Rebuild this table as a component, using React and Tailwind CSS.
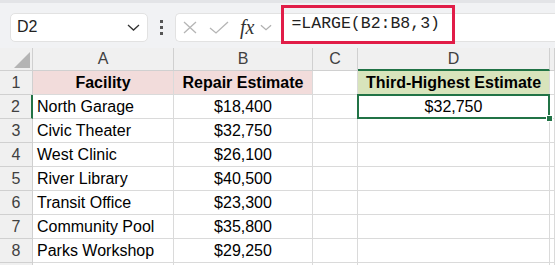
import React from "react";

const rows = [
  ["North Garage", "$18,400"],
  ["Civic Theater", "$32,750"],
  ["West Clinic", "$26,100"],
  ["River Library", "$40,500"],
  ["Transit Office", "$23,300"],
  ["Community Pool", "$35,800"],
  ["Parks Workshop", "$29,250"],
];

const hdr = "h-[23px] bg-[#f0f0f0] border-r border-b border-[#d0d0d0] flex items-center justify-center text-[16px] text-[#404040]";
const cell = "h-[24px] border-r border-b border-[#dadada] flex items-center text-[16px] text-black whitespace-nowrap";
const rowHdr = "h-[24px] bg-[#f0f0f0] border-r border-b border-[#d0d0d0] flex items-center justify-center text-[16px] text-[#404040]";

const Chevron = ({ className }) => (
  <svg className={className} width="13" height="7" viewBox="0 0 13 7" fill="none">
    <path d="M1 1l5.5 5L12 1" stroke="currentColor" strokeWidth="1.3" />
  </svg>
);

const App = () => {
  return (
    <div
      className="w-[555px] h-[265px] overflow-hidden bg-white"
      style={{ fontFamily: '"Liberation Sans", Arial, sans-serif' }}
    >
      {/* formula toolbar */}
      <div className="h-[48px] bg-[#f1f2f4] border-t-[3px] border-[#e3e4e7] flex items-center pl-[10px]">
        <div className="w-[138px] h-[29px] bg-white rounded-[5px] border border-[#e2e2e2] flex items-center justify-between pl-[6px] pr-[7px] mt-[3px]">
          <span className="text-[16px] text-[#222]">D2</span>
          <Chevron className="text-[#333]" />
        </div>
        <div className="w-[27px] flex flex-col items-center gap-[3px] mt-[3px]">
          <span className="w-[3px] h-[3px] bg-[#555]" />
          <span className="w-[3px] h-[3px] bg-[#555]" />
          <span className="w-[3px] h-[3px] bg-[#555]" />
        </div>
        <div className="flex-1 h-[29px] bg-white rounded-l-[5px] border border-r-0 border-[#e2e2e2] flex items-center pl-[6px] mt-[3px]">
          <svg width="16" height="13" viewBox="0 0 16 13" className="text-[#b5b5b5]">
            <path d="M2 1l12 11M14 1L2 12" stroke="currentColor" strokeWidth="1.3" fill="none" />
          </svg>
          <svg width="20" height="13" viewBox="0 0 20 13" className="ml-[11px] text-[#b5b5b5]">
            <path d="M1 7l6 5L19 1" stroke="currentColor" strokeWidth="1.3" fill="none" />
          </svg>
          <span
            className="ml-[11px] text-[20px] italic text-[#333] leading-none"
            style={{ fontFamily: '"Liberation Serif", "Times New Roman", serif' }}
          >
            fx
          </span>
          <Chevron className="ml-[6px] text-[#b0b0b0] w-[12px]" />
          <div className="ml-[9px] w-[174px] h-[39px] mb-[5px] border-[3px] border-[#e11d48] flex items-center pl-[7px]">
            <span
              className="text-[16.5px] text-[#222]"
              style={{ fontFamily: '"Liberation Mono", "Courier New", monospace' }}
            >
              =LARGE(B2:B8,3)
            </span>
          </div>
        </div>
      </div>

      {/* sheet grid */}
      <div className="grid grid-cols-[33px_141px_139px_45px_192px_1fr]">
        <div className={hdr + " relative"}>
          <svg width="16" height="16" viewBox="0 0 16 16" className="absolute left-[14px] top-[4px]">
            <path d="M16 0V16H0Z" fill="#b4b4b4" />
          </svg>
        </div>
        <div className={hdr}>A</div>
        <div className={hdr}>B</div>
        <div className={hdr}>C</div>
        <div className={hdr + " bg-[#d3d3d3] text-[#217346] border-b-2 border-b-[#217346]"}>D</div>
        <div className={hdr} />

        <div className={rowHdr}>1</div>
        <div className={cell + " justify-center bg-[#f2dcdb] font-bold text-[15px]"}>Facility</div>
        <div className={cell + " justify-center bg-[#f2dcdb] font-bold text-[15px]"}>Repair Estimate</div>
        <div className={cell} />
        <div className={cell + " justify-center bg-[#d8e4bc] font-bold text-[15px]"}>Third-Highest Estimate</div>
        <div className={cell} />

        {rows.map(([name, val], i) => (
          <React.Fragment key={name}>
            <div
              className={
                i === 0
                  ? rowHdr + " bg-[#d3d3d3] text-[#217346] border-r-2 border-r-[#217346]"
                  : rowHdr
              }
            >
              {i + 2}
            </div>
            <div className={cell + " pl-[4px]"}>{name}</div>
            <div className={cell + " justify-center"}>{val}</div>
            <div className={cell} />
            {i === 0 ? (
              <div className={cell + " justify-center relative"}>
                $32,750
                <div className="absolute -left-[1px] -top-[1px] -right-[1px] -bottom-[1px] border-2 border-[#217346]" />
                <div className="absolute -right-[4px] -bottom-[4px] w-[7px] h-[7px] bg-[#217346] border border-white" />
              </div>
            ) : (
              <div className={cell} />
            )}
            <div className={cell} />
          </React.Fragment>
        ))}
        <div className={rowHdr} />
        <div className={cell} />
        <div className={cell} />
        <div className={cell} />
        <div className={cell} />
        <div className={cell} />
      </div>
    </div>
  );
};

export default App;
